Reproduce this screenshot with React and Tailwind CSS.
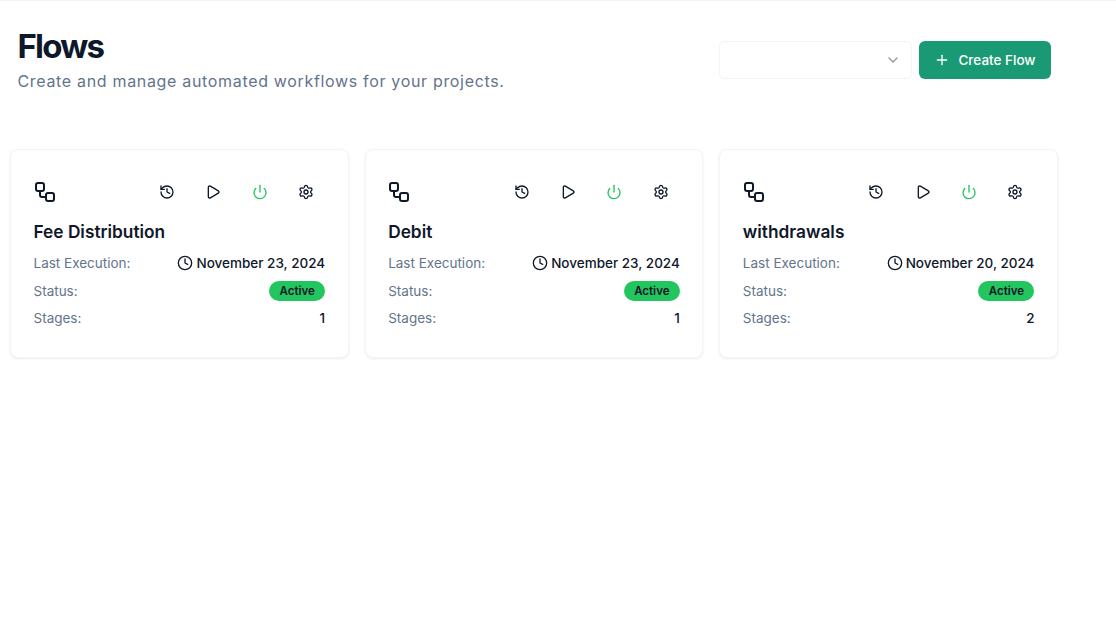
import { History, Play, Power, Settings, Clock, Plus, ChevronDown, Workflow } from "lucide-react";

const flows = [
  { name: "Fee Distribution", date: "November 23, 2024", stages: 1 },
  { name: "Debit", date: "November 23, 2024", stages: 1 },
  { name: "withdrawals", date: "November 20, 2024", stages: 2 },
];

function Card({ flow }) {
  return (
    <div className="rounded-lg border border-[#f3f4f6] bg-white pt-[23px] pb-[23px] pl-[23.5px] pr-[22.5px] shadow-[0_1px_3px_rgba(0,0,0,0.07)] h-[209px]">
      <div className="flex items-center justify-between h-[32px] pr-[11px] mt-[3px]">
        <Workflow className="w-6 h-6 text-[#0f172a] -ml-[2px]" strokeWidth={2} />
        <div className="flex items-center gap-[30.4px]">
          <History className="w-4 h-4 text-[#0f172a]" />
          <Play className="w-4 h-4 text-[#0f172a]" />
          <Power className="w-4 h-4 text-[#22c55e]" />
          <Settings className="w-4 h-4 text-[#0f172a]" />
        </div>
      </div>
      <h3 className="mt-[10px] text-[17.3px] leading-7 font-semibold text-[#0f172a] -ml-px">{flow.name}</h3>
      <div className="mt-[7px] text-[13.5px] flex flex-col">
        <div className="flex items-center justify-between h-[20px] -ml-px">
          <span className="text-[#64748b]">Last Execution:</span>
          <span className="flex items-center gap-[3px] font-[450] text-[#0f172a]">
            <Clock className="w-4 h-4" />
            {flow.date}
          </span>
        </div>
        <div className="flex items-center justify-between h-[20px] mt-[8px] -ml-px">
          <span className="text-[#64748b]">Status:</span>
          <span className="rounded-full bg-[#22c55e] w-[56px] h-[20px] pt-px flex items-center justify-center text-[11.5px] font-semibold text-[#0f172a]">Active</span>
        </div>
        <div className="flex items-center justify-between h-[20px] mt-[7px] -ml-px">
          <span className="text-[#64748b]">Stages:</span>
          <span className="font-[450] text-[#0f172a]">{flow.stages}</span>
        </div>
      </div>
    </div>
  );
}

export default function App() {
  return (
    <div className="min-h-[630px] bg-white border-t border-[#f3f4f6] font-['Inter',sans-serif] pl-[10px] pr-[58px]">
      <div className="flex items-start justify-between pl-[7.5px] pr-[7px] pt-[25px]">
        <div>
          <h1 className="text-[33px] leading-[40px] font-bold text-[#0f172a] tracking-[-0.055em]">Flows</h1>
          <p className="text-base leading-6 tracking-[0.042em] mt-[3px] text-[#64748b]">Create and manage automated workflows for your projects.</p>
        </div>
        <div className="flex items-center gap-[7px] mt-[15px]">
          <div className="w-[193px] h-[38px] rounded-md border border-[#f3f4f6] bg-white flex items-center justify-end pr-[10px]">
            <ChevronDown className="w-4 h-4 text-[#94979f]" />
          </div>
          <button className="h-[38px] w-[132px] rounded-md bg-[#1a9a74] text-white text-[13.5px] font-[450] flex items-center justify-center gap-2">
            <Plus className="w-4 h-4" />
            Create Flow
          </button>
        </div>
      </div>
      <div className="grid grid-cols-3 gap-4 mt-[56px]">
        {flows.map((f) => <Card key={f.name} flow={f} />)}
      </div>
    </div>
  );
}
